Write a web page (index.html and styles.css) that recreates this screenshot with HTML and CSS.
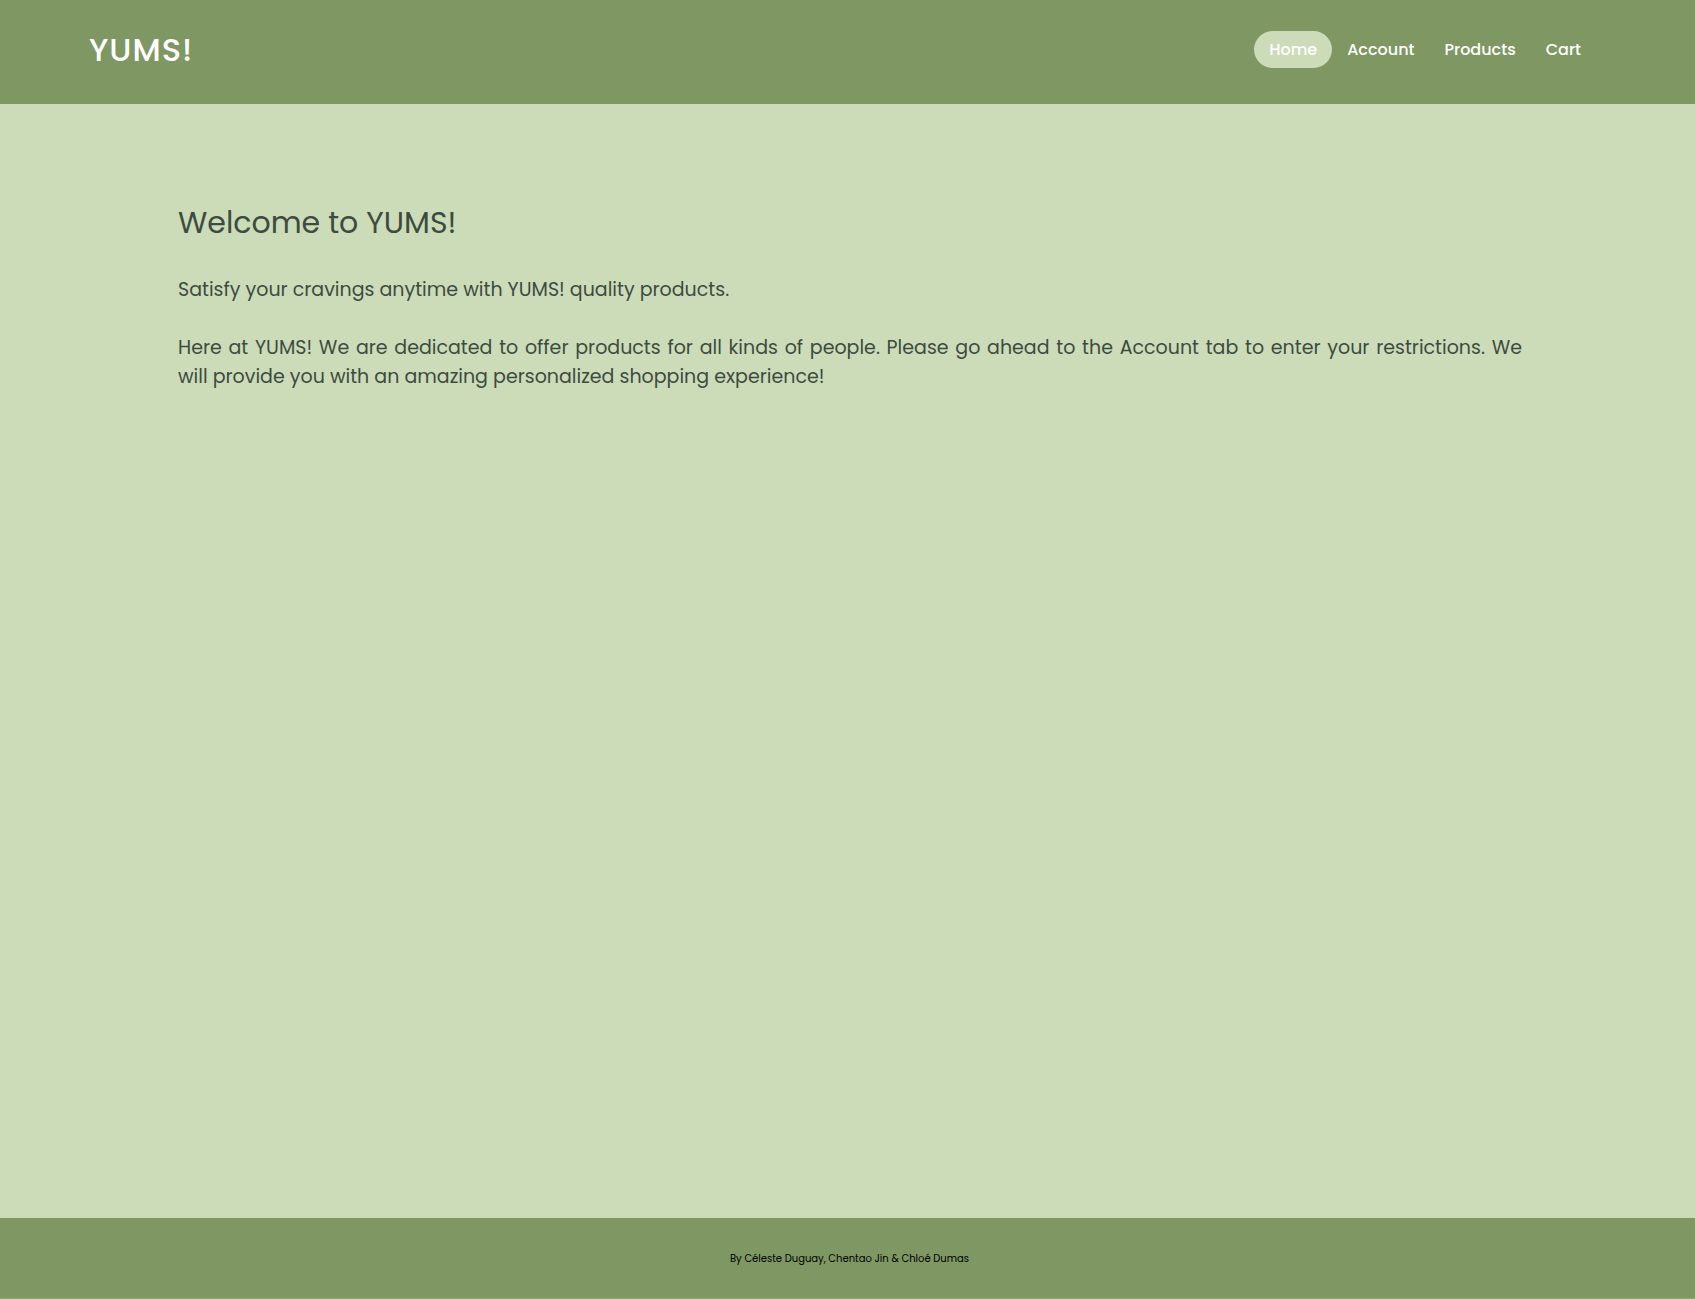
FILE: index.html
```html
<!DOCTYPE html>
<html lang="en">
<head>
<meta charset="utf-8">
<meta name="viewport" content="width=device-width, initial-scale=1">
<title>YUMS!</title>
<link rel="stylesheet" href="styles.css">
</head>
<body>
<header class="site-header">
<a class="logo" href="#">YUMS!</a>
<nav class="nav" aria-label="Main">
<a class="nav-link active" href="#" aria-current="page">Home</a>
<a class="nav-link" href="#account">Account</a>
<a class="nav-link" href="#products">Products</a>
<a class="nav-link" href="#cart">Cart</a>
</nav>
</header>
<main class="content">
<h1 class="title">Welcome to YUMS!</h1>
<p class="text">Satisfy your cravings anytime with YUMS! quality products.</p>
<p class="text">Here at YUMS! We are dedicated to offer products for all kinds of people. Please go ahead to the Account tab to enter your restrictions. We <span class="keep">will provide</span> you with an amazing personalized shopping experience!</p>
</main>
<footer class="site-footer">By Céleste Duguay, Chentao Jin &amp; Chloé Dumas</footer>
</body>
</html>
```
FILE: styles.css
```css
* {
  box-sizing: border-box;
}

body {
  display: flex;
  flex-direction: column;
  min-height: 100vh;
  margin: 0;
  background: #ccdbb8;
  color: #3c4c40;
  font-family: Poppins, Inter, sans-serif;
}

.site-header {
  display: flex;
  align-items: flex-start;
  justify-content: space-between;
  padding: 31px 99px 33px 89px;
  background: #7e9763;
}

.logo {
  color: #fff;
  font-size: 32px;
  font-weight: 500;
  line-height: 38px;
  letter-spacing: 1px;
  text-decoration: none;
}

.nav {
  display: flex;
}

.nav-link {
  padding: 0 15px;
  border-radius: 20px;
  color: #fff;
  font-size: 16px;
  font-weight: 500;
  line-height: 37px;
  text-decoration: none;
}

.nav-link.active {
  background: #ccdbb8;
}

.content {
  flex: 1;
  padding: 94px 173px 40px 178px;
}

.title {
  margin: 0 0 27px;
  font-size: 30px;
  font-weight: 400;
  line-height: 50px;
}

.text {
  margin: 0 0 29px;
  font-size: 19px;
  line-height: 29px;
  text-align: justify;
}

.keep {
  white-space: nowrap;
}

.site-footer {
  padding: 32px 0 30px 4px;
  border-bottom: 1px solid #92a67c;
  background: #7e9763;
  color: #000;
  font-size: 10px;
  line-height: 18px;
  text-align: center;
}

.site-header {
  min-height: 104px;
}
```
